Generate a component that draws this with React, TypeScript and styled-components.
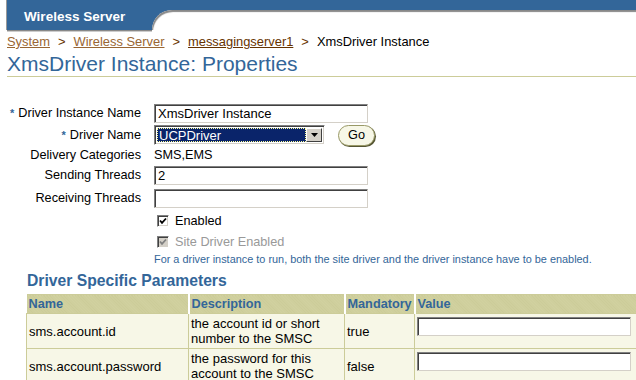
import React from "react";
import styled, { createGlobalStyle } from "styled-components";

const BLUE = "#336699";
const OLIVE = "#cccc99";
const CREAM = "#f7f7e7";

const GlobalStyle = createGlobalStyle`
  html, body {
    margin: 0;
    padding: 0;
    background: #fff;
  }
  body {
    font-family: "Liberation Sans", Arial, sans-serif;
    font-size: 12.7px;
    color: #000;
  }
`;

const Page = styled.div`
  width: 636px;
  height: 380px;
  overflow: hidden;
`;

const Header = styled.div`
  display: flex;
  height: 30px;
  margin-left: 7px;
  background: ${BLUE};
  box-shadow: -1px 0 0 #999;
`;

const Tab = styled.div`
  width: 145px;
  box-sizing: border-box;
  padding: 2px 0 0 17px;
  display: flex;
  align-items: center;
  color: #fff;
  font-weight: bold;
  font-size: 13.5px;
  box-shadow: 0 1px 0 #888, 0 2px 0 #ccc;
`;

const Notch = styled.div`
  flex: 1;
  margin-top: 10px;
  background: #fff;
  border-top-left-radius: 20px;
  box-shadow: inset 1px 2px 1px #888;
`;

const Crumbs = styled.div`
  margin: 5px 0 0 7px;
  height: 14px;
  line-height: 14px;
  font-size: 12.9px;
  white-space: nowrap;
`;

const CrumbLink = styled.a<{ $dark?: boolean }>`
  color: ${(p) => (p.$dark ? "#663300" : "#996633")};
  text-decoration: underline;
`;

const Sep = styled.span`
  margin: 0 8px;
  color: #663300;
`;

const Title = styled.h1`
  margin: 3px 0 0 7px;
  height: 24px;
  line-height: 24px;
  font-size: 21px;
  font-weight: normal;
  color: ${BLUE};
  border-bottom: 1px solid ${OLIVE};
`;

const Form = styled.div`
  display: grid;
  grid-template-columns: 141px 1fr;
  grid-template-rows: 22px 22px 18px 22px 24px 22px 20px 14px;
  column-gap: 13px;
  align-items: center;
  margin-top: 25px;
`;

const Label = styled.div`
  text-align: right;
  white-space: nowrap;
`;

const Req = styled.span`
  color: ${BLUE};
  font-size: 11px;
  font-weight: bold;
  margin-right: 4px;
`;

const Field = styled.div`
  display: flex;
  align-items: center;
  white-space: nowrap;
`;

const TextInput = styled.div<{ $w: number }>`
  width: ${(p) => p.$w}px;
  height: 19px;
  box-sizing: border-box;
  border: 1px solid;
  border-color: #808080 #d4d0c8 #d4d0c8 #808080;
  box-shadow: inset 1px 1px 0 #404040;
  background: #fff;
  padding: 0 3px;
  font-size: 13px;
  line-height: 17px;
  white-space: nowrap;
  overflow: hidden;
`;

const Select = styled.div`
  width: 171px;
  height: 20px;
  box-sizing: border-box;
  display: flex;
  border: 1px solid;
  border-color: #808080 #fff #fff #808080;
  box-shadow: inset 1px 1px 0 #404040, inset -1px -1px 0 #d4d0c8;
  padding: 2px;
  background: #fff;
`;

const SelectValue = styled.div`
  flex: 1;
  display: flex;
  align-items: center;
  padding-left: 2px;
  font-size: 13px;
  background: #0a246a;
  color: #fff;
  outline: 1px dotted #ffff99;
  outline-offset: -1px;
`;

const SelectArrow = styled.div`
  width: 16px;
  box-sizing: border-box;
  display: flex;
  align-items: center;
  justify-content: center;
  background: #d4d0c8;
  border: 1px solid;
  border-color: #fff #404040 #404040 #fff;
`;

const GoButton = styled.div`
  margin-left: 13px;
  width: 37px;
  height: 21px;
  box-sizing: border-box;
  display: flex;
  align-items: center;
  justify-content: center;
  border-radius: 11px;
  background: ${CREAM};
  border: 1px solid #999966;
  box-shadow: 1px 1px 0 #555533;
`;

const Check = styled.label<{ $disabled?: boolean }>`
  display: flex;
  align-items: center;
  gap: 6px;
  margin-left: 3px;
  color: ${(p) => (p.$disabled ? "#999" : "#000")};
`;

const Box = styled.span<{ $disabled?: boolean }>`
  width: 12px;
  height: 12px;
  box-sizing: border-box;
  display: flex;
  align-items: center;
  justify-content: center;
  border: 1px solid;
  border-color: #808080 #fff #fff #808080;
  box-shadow: inset 1px 1px 0 #404040, inset -1px -1px 0 #d4d0c8;
  background: ${(p) => (p.$disabled ? "#d4d0c8" : "#fff")};
`;

const Help = styled.div`
  font-size: 10.9px;
  color: ${BLUE};
  white-space: nowrap;
`;

const Section = styled.h2`
  margin: 5px 0 0 27px;
  height: 20px;
  line-height: 20px;
  font-size: 15.7px;
  font-weight: bold;
  color: ${BLUE};
`;

const Table = styled.table`
  margin: 3px 0 0 26px;
  width: 612px;
  border-collapse: collapse;
  border-top: 1px solid ${OLIVE};
  table-layout: fixed;
`;

const Th = styled.th<{ $w?: number }>`
  width: ${(p) => (p.$w ? `${p.$w}px` : "auto")};
  height: 18px;
  padding: 0 2px;
  text-align: left;
  font-size: 12.7px;
  font-weight: bold;
  color: ${BLUE};
  background: repeating-linear-gradient(
    45deg,
    #cccc99 0 1px,
    #d1d1a0 1px 2px
  );
  border-right: 2px solid #fff;
  white-space: nowrap;
`;

const Td = styled.td<{ $top?: boolean }>`
  height: ${(p) => (p.$top ? "31px" : "34px")};
  padding: ${(p) => (p.$top ? "3px 2px 0" : "0 2px")};
  background: ${CREAM};
  border: 1px solid ${OLIVE};
  font-size: 13px;
  line-height: 15px;
  vertical-align: ${(p) => (p.$top ? "top" : "middle")};
  white-space: nowrap;
`;

const Arrow = () => (
  <svg width="7" height="4" viewBox="0 0 7 4">
    <path d="M0 0 H7 L3.5 4 Z" fill="#000" />
  </svg>
);

const Tick = ({ color }: { color: string }) => (
  <svg width="8" height="8" viewBox="0 0 8 8">
    <path d="M1 3.5 L3 5.8 L7 1.5" stroke={color} strokeWidth="1.8" fill="none" />
  </svg>
);

const params = [
  {
    name: "sms.account.id",
    desc: ["the account id or short", "number to the SMSC"],
    mandatory: "true",
  },
  {
    name: "sms.account.password",
    desc: ["the password for this", "account to the SMSC"],
    mandatory: "false",
  },
];

export default function App() {
  return (
    <Page>
      <GlobalStyle />
      <Header>
        <Tab>Wireless Server</Tab>
        <Notch />
      </Header>
      <Crumbs>
        <CrumbLink>System</CrumbLink>
        <Sep>&gt;</Sep>
        <CrumbLink>Wireless Server</CrumbLink>
        <Sep>&gt;</Sep>
        <CrumbLink $dark>messagingserver1</CrumbLink>
        <Sep>&gt;</Sep>
        XmsDriver Instance
      </Crumbs>
      <Title>XmsDriver Instance: Properties</Title>

      <Form>
        <Label>
          <Req>*</Req>Driver Instance Name
        </Label>
        <Field>
          <TextInput $w={214}>XmsDriver Instance</TextInput>
        </Field>

        <Label>
          <Req>*</Req>Driver Name
        </Label>
        <Field>
          <Select>
            <SelectValue>UCPDriver</SelectValue>
            <SelectArrow>
              <Arrow />
            </SelectArrow>
          </Select>
          <GoButton>Go</GoButton>
        </Field>

        <Label>Delivery Categories</Label>
        <Field>SMS,EMS</Field>

        <Label>Sending Threads</Label>
        <Field>
          <TextInput $w={214}>2</TextInput>
        </Field>

        <Label>Receiving Threads</Label>
        <Field>
          <TextInput $w={214} />
        </Field>

        <span />
        <Field>
          <Check>
            <Box>
              <Tick color="#000" />
            </Box>
            Enabled
          </Check>
        </Field>

        <span />
        <Field>
          <Check $disabled>
            <Box $disabled>
              <Tick color="#808080" />
            </Box>
            Site Driver Enabled
          </Check>
        </Field>

        <span />
        <Help>
          For a driver instance to run, both the site driver and the driver instance have to be enabled.
        </Help>
      </Form>

      <Section>Driver Specific Parameters</Section>
      <Table>
        <thead>
          <tr>
            <Th $w={157}>Name</Th>
            <Th $w={150}>Description</Th>
            <Th $w={64}>Mandatory</Th>
            <Th>Value</Th>
          </tr>
        </thead>
        <tbody>
          {params.map((p) => (
            <tr key={p.name}>
              <Td>{p.name}</Td>
              <Td>
                {p.desc[0]}
                <br />
                {p.desc[1]}
              </Td>
              <Td>{p.mandatory}</Td>
              <Td $top>
                <TextInput $w={214} />
              </Td>
            </tr>
          ))}
        </tbody>
      </Table>
    </Page>
  );
}
